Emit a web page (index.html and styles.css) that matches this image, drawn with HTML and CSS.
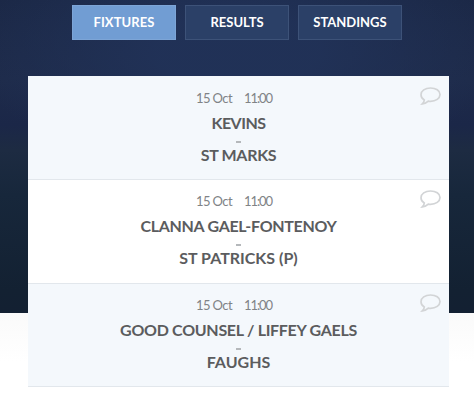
FILE: index.html
```html
<!DOCTYPE html>
<html lang="en">
<head>
<meta charset="utf-8">
<title>Fixtures</title>
<link rel="stylesheet" href="styles.css">
</head>
<body>
<main class="hero">
  <nav class="tabs">
    <a class="tab active">FIXTURES</a>
    <a class="tab">RESULTS</a>
    <a class="tab">STANDINGS</a>
  </nav>
  <section class="card">
    <article class="match">
      <div class="when"><span class="date">15 Oct</span><span class="time">11:00</span></div>
      <div class="team tighter">KEVINS</div>
      <div class="dash"></div>
      <div class="team tight">ST MARKS</div>
      <svg class="bubble" viewBox="0 0 21 18"><path d="M4.300 13C2.200 11.800 1 9.800 1 7.700C1 3.900 5.100 1 10.500 1s9.500 2.700 9.500 6.500s-4.200 6.800-9.500 6.800c-.8 0-1.500 0-2.200-.2C6.600 15.700 4.800 16.700 2.300 16.900C3.500 15.700 4.200 14.500 4.300 13Z"/></svg>
    </article>
    <article class="match">
      <div class="when"><span class="date">15 Oct</span><span class="time">11:00</span></div>
      <div class="team tight">CLANNA GAEL-FONTENOY</div>
      <div class="dash"></div>
      <div class="team">ST PATRICKS (P)</div>
      <svg class="bubble" viewBox="0 0 21 18"><path d="M4.300 13C2.200 11.800 1 9.800 1 7.700C1 3.900 5.100 1 10.500 1s9.500 2.700 9.500 6.500s-4.200 6.800-9.500 6.800c-.8 0-1.500 0-2.200-.2C6.600 15.700 4.800 16.700 2.300 16.900C3.500 15.700 4.200 14.500 4.300 13Z"/></svg>
    </article>
    <article class="match">
      <div class="when"><span class="date">15 Oct</span><span class="time">11:00</span></div>
      <div class="team tight">GOOD COUNSEL / LIFFEY GAELS</div>
      <div class="dash"></div>
      <div class="team">FAUGHS</div>
      <svg class="bubble" viewBox="0 0 21 18"><path d="M4.300 13C2.200 11.800 1 9.800 1 7.700C1 3.900 5.100 1 10.500 1s9.500 2.700 9.500 6.500s-4.200 6.800-9.500 6.800c-.8 0-1.500 0-2.200-.2C6.600 15.700 4.800 16.700 2.300 16.900C3.500 15.700 4.200 14.500 4.300 13Z"/></svg>
    </article>
  </section>
</main>
</body>
</html>
```
FILE: styles.css
```css
* { box-sizing: border-box; }
body {
  margin: 0;
  height: 411px;
  overflow: hidden;
  font-family: Lato, "Liberation Sans", sans-serif;
  background:
    radial-gradient(ellipse 270px 120px at 237px 50px, rgba(33, 50, 88, 0.9) 30%, rgba(33, 50, 88, 0) 100%) 0 0 / 100% 313px no-repeat,
    linear-gradient(#1b2846 0, #1e2b4a 80px, #1b2748 125px, #1d2b42 150px, #17273b 195px, #132132 290px, #132032 313px, #fafafa 313px, #fff 362px);
}
.hero { padding: 5px 25px 0 28px; }
.tabs { display: flex; gap: 9px; padding-left: 44px; }
.tab {
  width: 104px;
  height: 35px;
  border: 1px solid #3d5278;
  background: #2b4067;
  color: #fff;
  font-size: 13px;
  font-weight: 700;
  line-height: 33px;
  text-align: center;
}
.tab.active { background: #719dd3; border-color: #7da5d6; letter-spacing: 0.1px; }
.card { margin-top: 36px; width: 421px; padding-top: 1px; background: #f4f8fc; }
.match {
  position: relative;
  height: 103.400px;
  padding-top: 12px;
  background: #fff;
  border-bottom: 1px solid #e2e7ec;
  text-align: center;
}
.match:nth-child(odd) { background: #f4f8fc; }
.when {
  display: flex;
  padding-left: 168px;
  height: 18px;
  line-height: 18px;
  font-size: 13px;
  text-align: left;
  color: #808386;
}
.date { width: 48px; letter-spacing: -0.600px; }
.time { letter-spacing: -1.100px; }
.team {
  height: 20px;
  margin-top: 6px;
  line-height: 20px;
  font-size: 16px;
  font-weight: 700;
  color: #5b5c5e;
  white-space: nowrap;
}
.tight { letter-spacing: -0.300px; }
.tighter { letter-spacing: -0.500px; }
.dash { width: 5px; height: 2px; margin: 8px auto -4px; background: #b5b8bb; }
.bubble { position: absolute; top: 10px; right: 8px; width: 21px; height: 18px; fill: none; stroke: #d2d4d6; stroke-width: 1.700; }
```
